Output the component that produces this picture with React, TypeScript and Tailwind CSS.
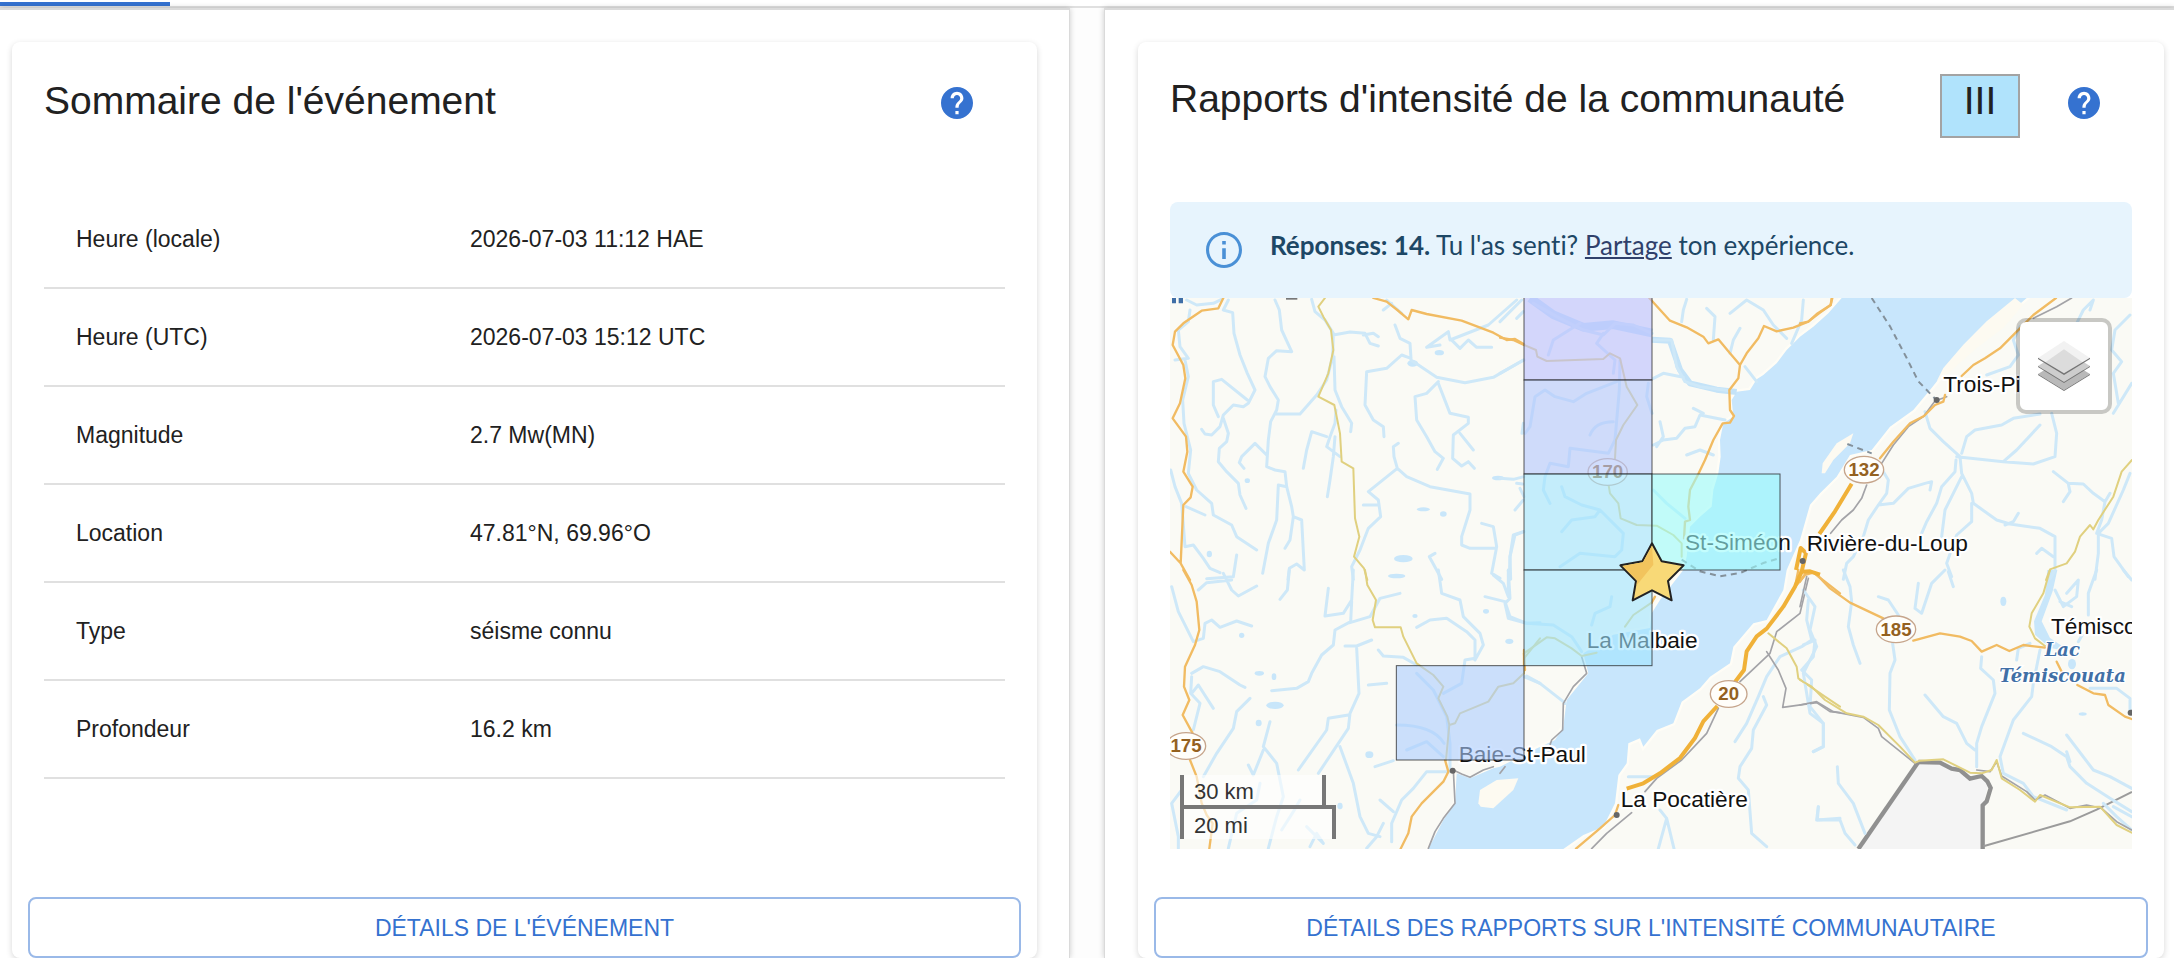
import type { ReactNode } from 'react'

const EVENT_ROWS = [
  { label: 'Heure (locale)', value: '2026-07-03 11:12 HAE' },
  { label: 'Heure (UTC)', value: '2026-07-03 15:12 UTC' },
  { label: 'Magnitude', value: '2.7 Mw(MN)' },
  { label: 'Location', value: '47.81°N, 69.96°O' },
  { label: 'Type', value: 'séisme connu' },
  { label: 'Profondeur', value: '16.2 km' },
]

const INTENSITY_CELLS = [
  { x: 1062, y: -60, w: 384, h: 306, fill: '#b9beff' },
  { x: 1062, y: 246, w: 384, h: 282, fill: '#b3c6fd' },
  { x: 1062, y: 528, w: 384, h: 288, fill: '#a0e4ff' },
  { x: 1446, y: 528, w: 384, h: 288, fill: '#9bfcfc' },
  { x: 1062, y: 816, w: 384, h: 287, fill: '#a0e4ff' },
  { x: 679, y: 1103, w: 383, h: 283, fill: '#accdff' },
]

const SHIELDS = [
  { x: 1313, y: 522, label: '170' },
  { x: 2082, y: 515, label: '132' },
  { x: 2178, y: 994, label: '185' },
  { x: 1676, y: 1188, label: '20' },
  { x: 48, y: 1344, label: '175' },
]

const PLACES = [
  { x: 2320, y: 281, label: 'Trois-Pistoles' },
  { x: 1910, y: 760, label: 'Rivière-du-Loup' },
  { x: 1545, y: 756, label: 'St-Siméon' },
  { x: 1250, y: 1050, label: 'La Malbaie' },
  { x: 866, y: 1392, label: 'Baie-St-Paul' },
  { x: 1352, y: 1528, label: 'La Pocatière' },
  { x: 2643, y: 1008, label: 'Témisco' },
]

interface Tile {
  x: number
  y: number
  rivers: string
  roads: string
  minor: string
  rails: string
}

const TILES: Tile[] = [
  {
    x: -30,
    y: -24,
    rivers:
      'M80 30L110 45L160 40L185 28M90 60L85 95L55 120L60 170L85 205L45 210M205 30L190 60L218 68L222 130L240 195L262 250L285 300L265 340L250 350L220 345L190 375L180 410L155 435L135 432L125 418M175 380L160 345V275L185 268L262 330M190 385L205 430L200 455L178 475L175 515L200 545L235 580L240 615L258 655M345 30L358 60L365 120L395 185L350 182L325 205L315 260L330 290L355 330L350 360L332 395L325 450L320 530L345 540L375 545L380 590L395 650L400 680L425 690L433 840L410 822L388 835L384 868M350 372H420L470 315L500 270L518 200L520 130L495 90L465 65L455 28M520 135L570 126L615 130L630 160L655 168M610 135L640 130L655 140M522 200L525 300L545 350L575 400L572 425M528 360L525 400L510 440L500 470L540 500M525 440L520 500L510 570L502 620M500 440L455 425L440 480L430 535M320 495L285 460L245 500L238 518L252 535M380 590L355 585L350 690L325 760L308 850M400 680L390 750L375 775M75 210L85 260L68 330L72 400L92 480L85 550L110 600L155 640L160 675L215 705L230 740L290 780M78 650L135 675M32 540L45 590L65 640L75 770L100 765L130 805L150 835L180 848M230 795L220 860L140 866M705 105L720 145L750 160L753 205L725 195L680 235L620 245L615 345L640 390L670 410L672 440M753 210L830 262L915 278L1000 262L1090 210M835 275L800 310L765 320L770 390L800 440L825 485L850 505L832 538M835 280L870 370L925 382L925 400L880 435L878 505L905 528L925 515L943 535M900 430L940 480M715 460L700 470L702 500L712 535L625 605L655 630L662 680L625 715L600 780M712 535L740 560L810 590L930 612V660L905 740V765L930 775H1005M610 645H655M965 700L1000 710L1010 770L995 850L1020 865M1090 725L1060 735L1050 800L1048 868M1090 630L1065 660M800 172L865 125L870 150L985 105L1070 30M800 172L840 165M870 145L900 175L925 150L950 172H995M1070 580L1088 582M825 790L808 800L845 868M580 868L575 830L600 780M680 30L725 70M670 60L695 40M1070 85L1090 65M1090 400L1086 430',
    roads:
      'M190 24L175 55L125 62L70 100L45 125L38 165L70 225L76 265L60 340L38 385L78 440L82 485L70 545L98 590L92 622L70 645L62 820M30 785L62 820L90 870M640 24L680 35L712 60L745 88L755 60L800 72L905 92L1000 128L1040 150L1065 147L1092 163',
    minor:
      'M495 24L475 50L490 80L513 120L520 180L505 250L475 320L523 345L540 430L545 515L580 535L585 685L598 740L582 800L612 835L622 870',
    rails: '',
  },
  {
    x: 990,
    y: -24,
    rivers:
      'M100 40L180 85L250 120L310 135L345 100L400 105L456 130M240 100L160 150L145 195M310 130L290 160L345 210L340 250M75 430L90 410L105 320L135 300L165 320L220 335L260 310L350 275M360 210L358 300L345 450L325 490L210 475L205 530L150 520L135 560L130 600L150 640M270 435Q285 395 340 395M185 590L195 620L245 645L300 660L370 730L365 780L345 800L240 790L180 830M300 660L285 680L215 690L185 725M560 28L550 60L545 95M460 150L515 150L530 230L555 275L600 290L690 302M460 265L490 250L550 262M620 55L645 80L640 150M720 115L700 150L690 190M690 70L740 30L790 60L820 105L860 145M910 30L905 90L875 160M735 230L770 275M460 465L490 450L530 445L555 415L585 410L600 375L675 390M480 395L490 440L470 470M580 355L610 370M560 495L600 480L640 495M460 600L500 640L555 685M0 250L72 210M0 95L65 30M0 565L40 568L72 560M60 595L72 620M72 725L45 735L30 800L32 868M445 280L440 320L456 370',
    roads:
      'M0 143L40 150L72 165M448 24L510 92L560 112L610 140L625 160L655 148L690 190L720 225L740 190L775 145L792 108L830 124L880 113L925 95L950 72L992 45L995 24M720 225L715 265L688 300L690 360L702 378L690 398L668 400L640 450L615 510L595 552L570 600L565 650L570 690L555 695L552 745',
    minor:
      'M72 165L108 180L112 200L140 213L310 207L330 190L360 205L380 290L412 345L370 405L348 450L345 505M325 580L330 610L355 640L362 685L410 705L470 707L520 735L545 760V800',
    rails: '',
  },
  {
    x: 1890,
    y: -24,
    rivers:
      'M375 365L390 415L430 455L480 500L485 550L515 610L520 640L590 690L630 702L720 715L765 740V840L750 866M485 490L500 440L525 420L605 405L640 385L720 372M470 500L610 515L700 522L765 500L770 430L755 370M610 515L650 480L720 405M468 510L465 545L425 590L410 640L380 695L365 730M485 560L435 660L425 740M515 640V695L470 735L440 820L455 860M615 705L640 695L655 670M250 545L265 570L260 610L235 645L205 690L190 740L160 800L140 820L130 868M235 645L280 640L325 595L375 580L395 575L390 600M760 545L805 580L850 582L880 610L915 635L905 690L890 730L935 745L942 800L985 860M805 582L810 605L790 635M990 550L970 600L925 700L895 730V790L885 868M915 635L930 610M710 790L725 775L760 800M880 30L850 60L830 100M870 60L880 30M990 75L945 120L935 180L965 215L940 250L955 340M995 280L940 370M660 110L640 150L655 195L630 230L560 255',
    roads:
      'M0 100L25 95L60 68L92 45L97 24M768 24L700 75L650 125L600 175L555 205L520 225L485 258M435 315L430 335L405 345L372 378L330 400L280 455L240 505',
    minor: 'M996 510L965 545L940 620L895 690L880 718L870 705L840 740L825 785L800 820L750 838L738 870',
    rails: 'M815 24L770 50L700 85M440 320L405 333L370 380L325 410L280 465L245 520M200 585L185 625L160 660L125 690L92 730',
  },
  {
    x: -30,
    y: 816,
    rivers:
      'M35 50L55 125L100 215L130 205L135 160L155 150L180 172L230 153L275 168M115 60L140 38L215 30M190 10L215 60L235 78L290 48M388 0L382 60L360 88M505 55L495 138L550 130L575 90L580 0M575 95L572 155L525 180L520 225L485 255L455 310L445 335L410 355L335 362M570 158L630 140L660 85L720 70M555 228H590L635 210M590 235L597 370L570 430L565 475L475 610M565 435L505 445L500 480L415 600M540 530L580 640L600 740L625 790L660 800M655 240L670 258L730 262L770 285M770 172L810 150L860 145L920 185L945 210V265L915 270L905 340L850 370M835 0L845 70L900 90L910 140L960 190L970 225L945 270M95 310L130 290L180 305L240 345L255 352M95 320L92 370L120 400L100 480M95 370L115 345L160 415M270 385L230 425L220 475L170 550L130 620M330 455L310 530L350 580L370 680L350 740L325 835M310 540L280 615L265 585M65 660L35 700L55 800V835M205 835L230 730L290 690L300 640M420 690L400 725L365 780M710 465Q820 465 852 520M740 540L800 515L850 560M625 345L680 340M645 590L700 572M870 605L800 605L760 655L725 690L695 760V815M660 690L700 725M670 760L650 800L620 835M440 770L490 820L470 790L450 830M975 80L1035 95L1050 140L1100 160L1140 158M1000 15L1030 40L1045 80V0M1092 320L1140 340M770 310L820 360L860 440L870 520V600',
    roads:
      'M70 0L95 45L110 95L118 180L105 225L75 290L72 350L88 390L68 435L98 490M90 570L110 620L125 700L140 735L158 760L148 836M855 570L865 605L850 635L785 700L755 740L745 790L722 836M1092 300V240',
    minor:
      'M615 0L622 45L648 90L638 150L645 172L722 172L730 200L770 280L820 315L850 350L835 385L862 440L868 465L858 570M868 465L885 460L900 430L985 395L1015 350L1060 340L1092 310V265L1140 205',
    rails: 'M880 600L905 612L930 622L970 600L1000 590M1020 610L1035 590M880 600L885 700L850 745L825 785L805 835',
  },
  {
    x: 990,
    y: 816,
    rivers:
      'M25 0L30 85L15 100L25 145L80 160L160 165L215 200L245 245M275 165L285 130L330 110L335 80M80 318L120 340L190 395L195 400M925 90L920 150L935 210L905 230L840 260L800 320L775 380L740 460L705 515M905 300L940 260L945 210L910 225M905 300L935 330L930 410L970 460V530L940 545M790 380L800 405L760 480L755 535L720 590L715 625L745 660L755 790L800 830M480 720L500 745L475 836M500 745L522 836M385 620L460 620M955 710L950 750L1020 745',
    roads: 'M465 80L455 98M895 0L885 50L915 15L940 8L975 35L1020 70M355 705L345 735L300 775L228 836M75 300L72 250M920 10L890 45',
    minor: 'M455 98L400 135L375 170M72 250L140 202L165 205L215 235L245 258L290 248M805 190L860 235L890 290L895 325L975 380L1020 410',
    rails:
      'M925 25L900 130L830 185L810 250L720 335M655 415L620 490L545 570L470 625L435 665M395 728L320 790L275 836M800 245L835 300L858 355L848 412L950 398L990 425L1020 428M245 260L260 310L220 350L190 400L188 480L155 510L150 525',
  },
  {
    x: 1890,
    y: 816,
    rivers:
      'M130 0L150 50L155 95L145 170L160 225L180 280M235 80L265 90L295 135L275 200L285 270L270 310L268 420L300 500L345 570M435 0L395 40L365 130L345 115L355 40M445 5L460 50M10 60L45 110L30 180L50 230L10 310L30 430L70 460V530L40 545M545 260L542 295L580 330L585 370L545 470L530 520V590M375 375L430 440L470 460L500 520L525 540M720 240L700 340L695 380L640 450L600 560L610 610L670 640L700 680L800 720M670 490L755 530L800 560L810 590L860 640L930 685L995 725M800 495L880 600L930 620L995 655M800 545L810 575M910 700L950 740L995 780M940 710L995 740M890 0L865 70V135M970 0L995 30M765 60L790 110L830 80L835 30L800 70M780 95L815 110M835 215L855 180M650 270L655 235L690 220M870 355L950 355L990 385V420M112 590L115 640L160 700L195 790M55 710L52 750L120 750L135 790L165 825',
    roads: 'M0 35L20 5L45 8L90 55L150 98L250 145M340 212L420 190L480 200L515 213L545 245L590 225L628 243L670 225L735 233M770 275L785 305M832 345L880 370L915 375L925 405L975 440L995 447',
    minor:
      'M750 0L730 70L695 130L688 170L705 205L735 228M0 330L35 350L75 390L140 430L190 440L235 465L300 530L345 578L360 572L430 568L510 608L545 610L575 600L590 570L605 625L660 660L705 695L720 675L810 712L900 710L950 765L995 788',
    rails: 'M20 20L0 110M0 405L50 395L100 425L190 442L235 475L245 500L345 580M530 600L570 605L590 575L605 618L680 665L705 690L735 675L810 715L860 705L905 715L950 755L995 780',
  },
]

const LAKES = [
  [728, 196, 16, 10],
  [984, 540, 18, 7],
  [700, 782, 28, 11],
  [760, 634, 20, 6],
  [820, 648, 10, 8],
  [680, 834, 26, 7],
  [118, 768, 8, 10],
  [232, 548, 8, 7],
  [808, 164, 14, 8],
  [315, 1222, 26, 11],
  [268, 1126, 14, 7],
  [312, 1136, 7, 10],
  [266, 1275, 9, 10],
  [215, 1012, 8, 8],
  [598, 1370, 12, 10],
  [1018, 1030, 12, 8],
  [2500, 910, 9, 14],
  [2738, 1248, 12, 5],
  [2706, 1098, 12, 16],
  [510, 1524, 8, 10],
  [735, 954, 8, 6],
  [948, 940, 9, 7],
]

function HelpButton({ label }: { label: string }) {
  return (
    <button type="button" aria-label={label} className="flex h-[58px] w-16 shrink-0 items-center justify-center">
      <svg viewBox="2 2 20 20" className="size-8" fill="#3572d0" aria-hidden="true">
        <path d="M12 2C6.48 2 2 6.48 2 12s4.48 10 10 10 10-4.48 10-10S17.52 2 12 2zm1 17h-2v-2h2v2zm2.07-7.75l-.9.92C13.45 12.9 13 13.5 13 15h-2v-.5c0-1.1.45-2.1 1.17-2.83l1.24-1.26c.37-.36.59-.86.59-1.41 0-1.1-.9-2-2-2s-2 .9-2 2H8c0-2.21 1.79-4 4-4s4 1.79 4 4c0 .88-.36 1.68-.93 2.25z" />
      </svg>
    </button>
  )
}

function Card({ children, action }: { children: ReactNode; action: string }) {
  return (
    <section className="flex flex-1 flex-col rounded-lg bg-white shadow-[0_2px_6px_rgba(0,0,0,0.16)]">
      {children}
      <div className="mt-auto px-4 pt-12">
        <button
          type="button"
          className="h-[61px] w-full rounded-lg border-2 border-[#9ab9e8] text-[23px] leading-10 text-[#3572d0] uppercase"
        >
          {action}
        </button>
      </div>
    </section>
  )
}

function SummaryCard() {
  return (
    <Card action="Détails de l'événement">
      <header className="flex h-37 items-start justify-between pt-8 pr-12 pl-8">
        <h2 className="text-[39px] leading-[54px]">Sommaire de l'événement</h2>
        <HelpButton label="Aide sur le sommaire" />
      </header>
      <div className="px-8">
        <table className="w-full border-collapse text-left text-[23px] leading-8">
          <tbody>
            {EVENT_ROWS.map((row) => (
              <tr key={row.label} className="h-[98px] border-b-2 border-[#e0e0e0]">
                <th scope="row" className="w-[41%] px-8 font-normal">
                  {row.label}
                </th>
                <td className="px-8">{row.value}</td>
              </tr>
            ))}
          </tbody>
        </table>
      </div>
    </Card>
  )
}

function LayersIcon() {
  return (
    <svg viewBox="0 0 156 150" className="w-[52px]" aria-hidden="true">
      <path d="M0 99L78 51L156 99L78 147Z" fill="#b9b9b9" />
      <path d="M0 99L78 147L156 99V102L78 150L0 102Z" fill="#747474" />
      <path d="M0 75L78 27L156 75L78 123Z" fill="#cdcdcd" />
      <path d="M0 75L78 123L156 75V78L78 126L0 78Z" fill="#747474" />
      <path d="M0 51L78 0L156 51L78 99Z" fill="#f2f2f2" />
      <path d="M22 64L78 25L134 64L78 98Z" fill="#dcdcdc" />
      <path d="M0 50L78 97L156 50V54L78 102L0 54Z" fill="#747474" />
    </svg>
  )
}

function BaseMap() {
  return (
    <svg
      viewBox="0 0 2886 1653"
      preserveAspectRatio="xMidYMid slice"
      className="block h-[551px] w-full"
      role="img"
      aria-label="Carte des intensités signalées"
    >
      <rect width="2886" height="1653" fill="#fafaf5" />

      {/* Fleuve Saint-Laurent */}
      <path
        fill="#c8e6fc"
        stroke="#fffdf6"
        strokeWidth="14"
        paintOrder="stroke"
        d="M2015 0L1975 46L1930 86L1890 116L1850 156L1820 196L1780 231L1760 244L1740 276L1700 281L1685 306L1690 356L1660 376L1650 426L1652 476L1645 526L1630 576L1625 626L1590 656L1560 686L1550 776L1540 816L1470 906L1445 946L1440 990L1330 1010L1240 1066L1255 1126L1190 1206L1180 1286L1155 1326L1090 1356L1050 1376L990 1406L970 1411L900 1441L860 1426L855 1516L820 1566L775 1653L1180 1653L1240 1611L1300 1586L1335 1516L1345 1431L1370 1396L1375 1336L1410 1321L1420 1346L1460 1296L1510 1276L1535 1211L1590 1171L1620 1136L1680 1096L1690 1046L1750 976L1790 966L1840 876L1850 816L1890 726L1920 620L1950 586L2000 536L2040 471L2105 456L2160 386L2230 336L2280 276L2320 226L2390 166L2480 76L2540 26L2570 0Z"
      />
      <g fill="#fdfaf1">
        <path d="M1955 526L1958 496L2000 436L2050 406L2040 436L1990 486L1965 526Z" />
        <path d="M925 1516L930 1476L980 1446L1045 1441L1030 1476L970 1531L932 1526Z" />
        <path d="M2535 0L2450 70L2380 140L2320 210L2300 250L2330 230L2420 150L2500 90L2560 20Z" />
      </g>

      {/* Nouveau-Brunswick / Maine */}
      <path d="M2065 1653L2245 1392L2310 1394L2400 1442L2458 1446L2440 1520V1653Z" fill="#f4f4f4" />
      <path d="M2065 1653L2245 1392" stroke="#909090" strokeWidth="13" />
      <path
        d="M2245 1392L2310 1394L2345 1412L2370 1416L2400 1442L2435 1434L2452 1450L2462 1470L2450 1510L2438 1522V1653"
        fill="none"
        stroke="#909090"
        strokeWidth="13"
      />
      <path d="M2440 1645L2700 1570L2780 1535L2886 1482" fill="none" stroke="#9b9b9b" strokeWidth="6" />

      <g fill="#c8e6fa">
        {LAKES.map(([cx, cy, rx, ry]) => (
          <ellipse key={`${cx}-${cy}`} cx={cx} cy={cy} rx={rx} ry={ry} />
        ))}
        <path d="M2632 816H2662L2648 880L2615 970L2640 1020L2700 1060L2640 1050L2595 1010L2592 970L2625 890Z" />
      </g>

      {/* Fjord du Saguenay */}
      <g fill="none" stroke="#c4e3f8" strokeLinejoin="round">
        <path d="M1080 0L1150 50L1240 88L1330 80L1446 105" strokeWidth="26" />
        <path d="M1446 125L1500 128L1530 215L1560 256L1640 275L1700 282" strokeWidth="18" />
      </g>

      {TILES.map((tile) => (
        <g
          key={`${tile.x}/${tile.y}`}
          transform={`translate(${tile.x} ${tile.y})`}
          fill="none"
          strokeLinejoin="round"
          strokeLinecap="round"
        >
          <path d={tile.rivers} stroke="#cee8f8" strokeWidth="9" />
          <path d={tile.rails} stroke="#a3a3a7" strokeWidth="5" />
          <path d={tile.minor} stroke="#e0d07f" strokeWidth="6" />
          <path d={tile.roads} stroke="#f1bb62" strokeWidth="7" />
        </g>
      ))}

      {/* Autoroute 20 */}
      <g fill="none" stroke="#f0b138" strokeWidth="12" strokeLinejoin="round">
        <path d="M1695 1152L1722 1116L1730 1060L1760 1015L1790 992L1840 926L1875 866L1895 821M1642 1224L1600 1270L1575 1320L1530 1380L1470 1426L1420 1456L1370 1472" />
        <path d="M2045 557L1995 640L1948 708M1878 816L1892 750L1908 765L1895 821L1920 820L1950 830" />
      </g>
      <g fill="none" stroke="#84919b" strokeWidth="6" strokeDasharray="18 14">
        <path d="M2105 0L2160 85L2210 180L2245 250L2298 305M2032 438L2105 466" />
        <path d="M1535 785L1590 820L1650 835L1710 825L1780 795L1830 780" />
      </g>
      <g fill="#666">
        <circle cx="2300" cy="306" r="9" />
        <circle cx="1898" cy="789" r="9" />
        <circle cx="848" cy="1418" r="9" />
        <circle cx="1340" cy="1551" r="9" />
        <circle cx="2882" cy="1244" r="9" />
      </g>
      <path d="M6 0h12v16h-12zM26 0h13v16h-13z" fill="#3f6ea6" />
      <path d="M348 0h34v5h-34z" fill="#777" />

      <g fontFamily="'Liberation Sans', Arial, sans-serif">
        {SHIELDS.map((s) => (
          <g key={s.label}>
            <ellipse cx={s.x} cy={s.y} rx={s.label.length > 2 ? 59 : 55} ry="40" fill="#fffefa" stroke="#c6a58c" strokeWidth="4" />
            <text x={s.x} y={s.y + 19} textAnchor="middle" fontSize="56" fontWeight="700" fill="#94611f">
              {s.label}
            </text>
          </g>
        ))}
        {PLACES.map((p) => (
          <text
            key={p.label}
            x={p.x}
            y={p.y}
            fontSize="68"
            fill="#111"
            stroke="#fff"
            strokeWidth="14"
            strokeLinejoin="round"
            paintOrder="stroke"
          >
            {p.label}
          </text>
        ))}
      </g>
      <g
        fontFamily="'DejaVu Serif', serif"
        fontSize="54"
        fontStyle="italic"
        fontWeight="700"
        fill="#416fa6"
        stroke="#fff"
        strokeWidth="8"
        paintOrder="stroke"
      >
        <text x="2624" y="1073">Lac</text>
        <text x="2488" y="1152">Témiscouata</text>
      </g>

      {INTENSITY_CELLS.map((c) => (
        <rect
          key={`${c.x}-${c.y}`}
          x={c.x}
          y={c.y}
          width={c.w}
          height={c.h}
          fill={c.fill}
          fillOpacity="0.6"
          stroke="#222"
          strokeOpacity="0.75"
          strokeWidth="3"
        />
      ))}

      {/* Épicentre */}
      <path
        d="M1446 736L1475 790L1541 802L1494 849L1505 907L1446 877L1388 907L1398 849L1351 802L1417 790Z"
        fill="#f8d977"
        stroke="#222"
        strokeWidth="6"
        strokeLinejoin="round"
      />
      <path d="M1446 743L1419 793L1358 804L1401 848L1400 862L1450 800Z" fill="#f2c45d" />
    </svg>
  )
}

function IntensityCard() {
  return (
    <Card action="Détails des rapports sur l'intensité communautaire">
      <header className="flex h-40 items-start pt-8 pr-12 pl-8">
        <h2 className="flex-1 text-[39px] leading-[50px]">Rapports d'intensité de la communauté</h2>
        <div className="mr-8 h-16 w-20 shrink-0 border-2 border-[#a3a3a3] bg-[#b0e3fc] text-center text-[39px] leading-[50px]">
          III
        </div>
        <HelpButton label="Aide sur les rapports d'intensité" />
      </header>
      <div className="px-8">
        <div className="flex h-24 items-center rounded-lg bg-[#e7f4fd] px-9 font-['Lato',sans-serif] text-[26px] text-[#1d4765] [font-variant-ligatures:none]">
          <svg viewBox="2 2 20 20" className="mr-7 size-9 shrink-0" fill="#4a90d6" aria-hidden="true">
            <path d="M11 7h2v2h-2zM11 11h2v6h-2zM12 2C6.48 2 2 6.48 2 12s4.48 10 10 10 10-4.48 10-10S17.52 2 12 2zm0 18.300c-4.600 0-8.300-3.700-8.300-8.300S7.400 3.700 12 3.700s8.300 3.700 8.300 8.300-3.700 8.300-8.300 8.300z" />
          </svg>
          <p className="pb-2.5">
            <strong>Réponses: 14.</strong> Tu l'as senti?{' '}
            <a href="#partage" className="text-[#30406b] underline decoration-2 underline-offset-2">
              Partage
            </a>{' '}
            ton expérience.
          </p>
        </div>
        <div className="relative">
          <BaseMap />
          <button
            type="button"
            aria-label="Couches"
            className="absolute top-5 right-5 flex size-24 items-center justify-center rounded-[10px] border-4 border-black/20 bg-white bg-clip-padding"
          >
            <LayersIcon />
          </button>
          <div className="absolute bottom-2.5 left-2.5 text-[22px] leading-[34px] text-[#333]">
            <div className="h-[30px] w-[146px] border-x-4 border-[#777] bg-white/60 pl-2.5">30 km</div>
            <div className="h-[34px] w-[156px] border-4 border-b-0 border-[#777] bg-white/60 pl-2.5">20 mi</div>
          </div>
        </div>
      </div>
    </Card>
  )
}

export default function App() {
  return (
    <div className="flex min-h-screen flex-col bg-white font-['Liberation_Sans',Arial,sans-serif] text-[#212121]">
      <div className="border-b-2 border-[#e0e0e0] pt-0.5">
        <div className="h-1 w-[170px] bg-[#3572d0]" />
      </div>
      <main className="grid flex-1 grid-cols-2 gap-[34px] bg-[#fdfdfd]">
        <div className="flex border-t-2 border-r border-[#dadada] bg-white pt-8 pr-8 pl-3 shadow-[0_0_6px_rgba(0,0,0,0.2)]">
          <SummaryCard />
        </div>
        <div className="flex border-t-2 border-l border-[#dadada] bg-white pt-8 pr-2.5 pl-[33px] shadow-[0_0_6px_rgba(0,0,0,0.2)]">
          <IntensityCard />
        </div>
      </main>
    </div>
  )
}
